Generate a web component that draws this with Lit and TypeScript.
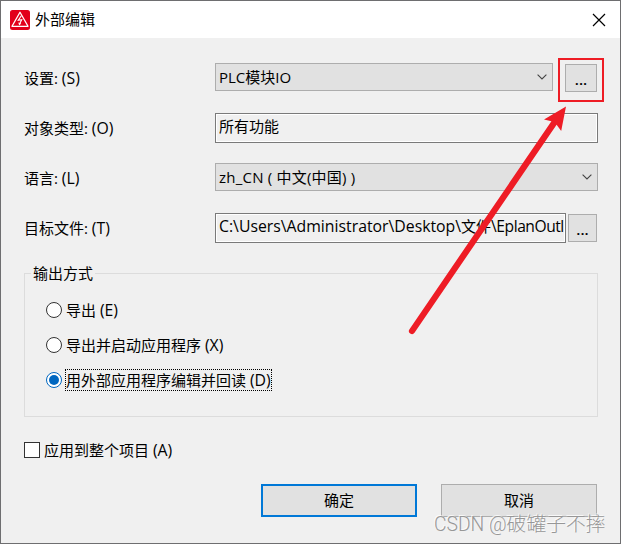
import { LitElement, html, css, svg } from "lit";
import { customElement } from "lit/decorators.js";
import { classMap } from "lit/directives/class-map.js";

const chevron = html`<svg class="chevron" width="10" height="6" viewBox="0 0 10 6">
  <path d="M0.6 0.6 L5 5 L9.4 0.6" fill="none" stroke="#444" stroke-width="1.1" />
</svg>`;

const arrow = svg`<path d="M566 106.5 L561.2 131 L556.6 124.8 L414.5 332.8 A3 3 0 0 1 409.5 329.2 L551.4 121.2 L544 119.5 Z" fill="#ee1c25" />`;

const options = [
  { label: "导出", key: "(E)", checked: false },
  { label: "导出并启动应用程序", key: "(X)", checked: false },
  { label: "用外部应用程序编辑并回读", key: "(D)", checked: true },
];

@customElement("app-root")
export class AppRoot extends LitElement {
  static styles = css`
    :host {
      display: block;
      position: relative;
      box-sizing: border-box;
      width: 621px;
      height: 544px;
      overflow: hidden;
      border: 1px solid #6e6e70;
      background: #f0f0f0;
      color: #000;
      font: 15px/20px "Open Sans", "Noto Sans CJK SC", sans-serif;
      white-space: nowrap;
    }
    * { box-sizing: border-box; }
    .titlebar {
      display: flex;
      align-items: center;
      height: 37px;
      padding: 0 14px 0 9px;
      background: #fff;
    }
    .title { flex: 1; margin: -2px 0 0 5px; }
    .logo, .close, .chevron { display: block; flex: none; }
    .body { padding: 25px 22px 0 23px; }
    .row {
      display: flex;
      height: 30px;
      margin-bottom: 20px;
    }
    .label { width: 191px; padding-top: 5px; }
    .key { font-size: 15.8px; line-height: 1; }
    .combo {
      display: flex;
      flex: 1;
      align-items: center;
      justify-content: space-between;
      height: 28px;
      padding: 0 5px 0 3px;
      border: 1px solid #adadad;
      background: #e1e1e1;
    }
    .field {
      flex: 1;
      min-width: 0;
      height: 30px;
      padding: 2px 2px 0 3px;
      border: 1px solid #7a7a7a;
      box-shadow: inset 0 0 0 1px #fff;
    }
    .latin { font-size: 15.8px; line-height: 1; }
    .tail { font-size: 15.6px; line-height: 1; letter-spacing: -0.45px; }
    .language { letter-spacing: 0.22px; }
    .button {
      display: flex;
      align-items: center;
      justify-content: center;
      flex: none;
      height: 28px;
      border: 1px solid #adadad;
      background: #e1e1e1;
    }
    .dots { padding-top: 1px; font-weight: 600; letter-spacing: 0.1px; }
    .wide { width: 32px; margin: 1px 1px 0 12px; }
    .narrow { width: 29px; margin: 1px 1px 0 2px; }
    .outputs {
      height: 144px;
      margin: 30px 0 25px;
      padding: 0 0 0 21px;
      border: 1px solid #dcdcdc;
    }
    .legend {
      display: block;
      width: 64px;
      height: 20px;
      margin: -11px 0 15px -15px;
      padding-left: 2px;
      background: #f0f0f0;
    }
    .option {
      display: flex;
      align-items: center;
      height: 23px;
      margin-bottom: 12px;
    }
    .radio {
      display: flex;
      align-items: center;
      justify-content: center;
      width: 16px;
      height: 16px;
      border: 1px solid #333;
      border-radius: 50%;
      background: #fff;
    }
    .radio.on { border-color: #0067c0; }
    .radio.on::after {
      content: "";
      width: 10px;
      height: 10px;
      border-radius: 50%;
      background: #0067c0;
    }
    .text {
      height: 22px;
      margin-left: 3px;
      border: 1px solid transparent;
    }
    .text.focus { border: 1px dotted #000; }
    .check { display: flex; align-items: center; height: 16px; }
    .box {
      width: 16px;
      height: 16px;
      margin-right: 4px;
      border: 1px solid #333;
      background: #fff;
    }
    .actions {
      display: flex;
      justify-content: flex-end;
      gap: 24px;
      margin: 26px 1px 0 0;
    }
    .action { width: 156px; height: 33px; padding-bottom: 2px; }
    .primary { border: 2px solid #0078d7; }
    .highlight {
      position: absolute;
      left: 557px;
      top: 57px;
      width: 46px;
      height: 44px;
      border: 2px solid #ee1c25;
    }
    .overlay { position: absolute; left: -1px; top: -1px; pointer-events: none; }
    .watermark {
      position: absolute;
      left: 433px;
      top: 512px;
      font: 19.8px/24px Roboto, "Noto Sans CJK SC", sans-serif;
      font-weight: 300;
      color: #979797;
      text-shadow: -1px -1px 0 rgba(255, 255, 255, 0.8);
    }
    .site { font-size: 19.3px; }
  `;

  render() {
    return html`
      <div class="titlebar">
        <svg class="logo" width="20" height="20" viewBox="0 0 20 20">
          <rect width="20" height="20" rx="2.5" fill="#e2001a" />
          <path d="M10 2.3 L18 16.3 H2 Z" fill="none" stroke="#fff" stroke-width="1.3" stroke-linejoin="round" />
          <path d="M11.3 5.7 L8.3 10.3 L11.7 9.7 L9.5 14" fill="none" stroke="#fff" stroke-width="1.1" />
          <path d="M8.3 12.5 L9.2 15.5 L11.2 13.4 Z" fill="#fff" />
        </svg>
        <span class="title">外部编辑</span>
        <svg class="close" width="14" height="14" viewBox="0 0 14 14">
          <path d="M1 1 L13 13 M13 1 L1 13" stroke="#000" stroke-width="1.2" />
        </svg>
      </div>
      <div class="body">
        <div class="row">
          <span class="label">设置: <span class="key">(S)</span></span>
          <div class="combo"><span>PLC模块IO</span>${chevron}</div>
          <div class="button wide dots">...</div>
        </div>
        <div class="row">
          <span class="label">对象类型: <span class="key">(O)</span></span>
          <div class="field">所有功能</div>
        </div>
        <div class="row">
          <span class="label">语言: <span class="key">(L)</span></span>
          <div class="combo"><span class="language">zh_CN ( 中文(中国) )</span>${chevron}</div>
        </div>
        <div class="row">
          <span class="label">目标文件: <span class="key">(T)</span></span>
          <div class="field"><span class="latin">C:\\Users\\Administrator\\Desktop\\</span>文件<span class="tail">\\EplanOutl</span></div>
          <div class="button narrow dots">...</div>
        </div>
        <div class="outputs">
          <span class="legend">输出方式</span>
          ${options.map(
            (o) => html`<div class="option">
              <span class=${classMap({ radio: true, on: o.checked })}></span>
              <span class=${classMap({ text: true, focus: o.checked })}>${o.label} <span class="key">${o.key}</span></span>
            </div>`
          )}
        </div>
        <div class="check"><span class="box"></span><span>应用到整个项目 <span class="key">(A)</span></span></div>
        <div class="actions">
          <div class="button action primary">确定</div>
          <div class="button action">取消</div>
        </div>
      </div>
      <div class="highlight"></div>
      <svg class="overlay" width="621" height="544" viewBox="0 0 621 544">${arrow}</svg>
      <div class="watermark"><span class="site">CSDN @</span>破罐子不摔</div>
    `;
  }
}
